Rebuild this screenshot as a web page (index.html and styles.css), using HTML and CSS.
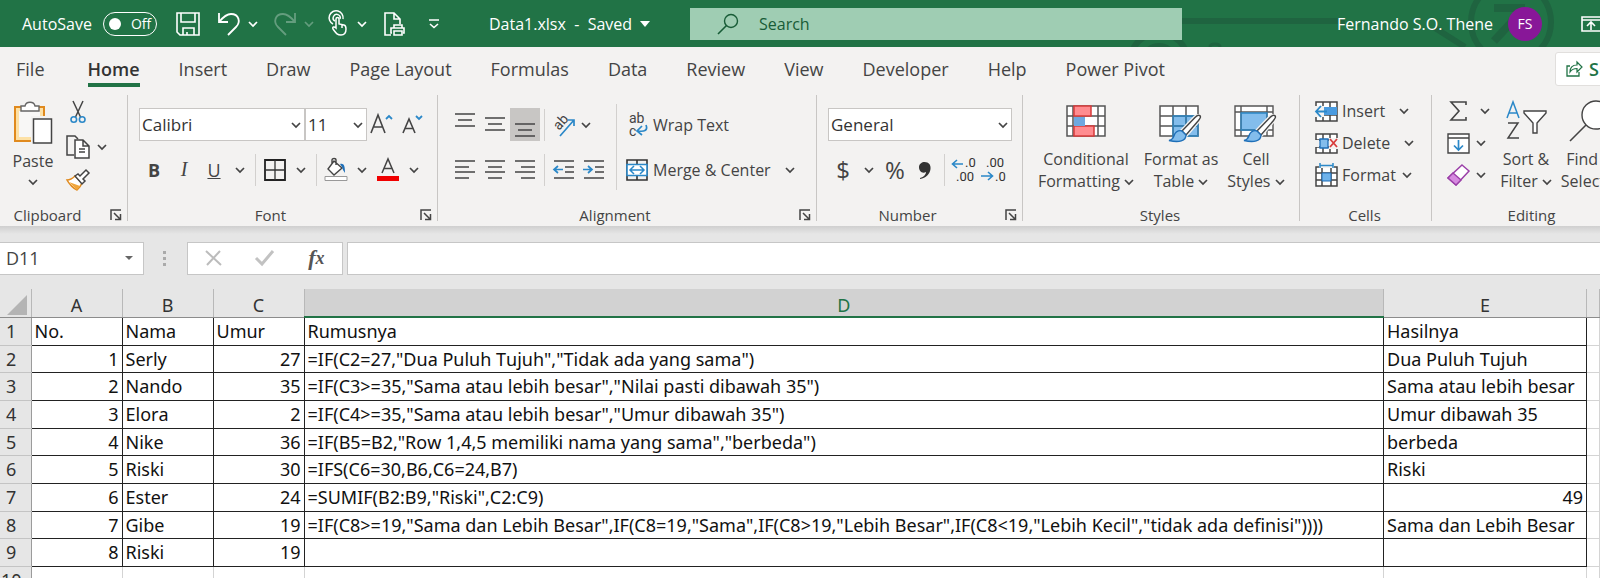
FILE: index.html
```
<!DOCTYPE html>
<html lang="id">
<head>
    <meta charset="UTF-8">
    <meta name="viewport" content="width=device-width, initial-scale=1.0">
    <title>Data1.xlsx - Saved</title>
    <link rel="stylesheet" href="styles.css">
</head>
<body>
    <!-- Shared icons -->
    <svg class="sprite" aria-hidden="true">
        <symbol id="chev" viewBox="0 0 10 10"><path d="M1 3l4 4 4-4" fill="none" stroke="currentColor" stroke-width="1.7"/></symbol>
        <symbol id="launch" viewBox="0 0 12 12"><path d="M1 11V1h10M4 4l6 6M10.500 5v5.500H5" fill="none" stroke="currentColor" stroke-width="1.5"/></symbol>
        <symbol id="brush" viewBox="0 0 34 30">
            <path d="M31.500 1.500c2 1 .5 3-1 5L18 21l-4-4L27 3.500c1.500-1.500 3-3 4.500-2z" fill="#fff" stroke="#f3f2f1" stroke-width="4"/>
            <path d="M31.500 1.500c2 1 .5 3-1 5L18 21l-4-4L27 3.500c1.500-1.500 3-3 4.500-2z" fill="#fff" stroke="#444" stroke-width="1.400"/>
            <path d="M14 17l4 4c0 6-7 8-17 5.500 5-1 4-3.500 6-7 1.500-2.500 5-3.500 7-2.500z" fill="#83bdec" stroke="#1e6fb8" stroke-width="1.400"/>
        </symbol>
    </svg>

    <header class="titlebar">
        <svg class="circuit" viewBox="0 0 480 47" aria-hidden="true">
            <g fill="none" stroke="#1f6440" stroke-width="6">
                <path d="M60 21h165M315 28l30 19"/>
                <circle cx="39" cy="62" r="29"/><circle cx="39" cy="62" r="17" stroke-width="4"/>
                <path d="M90 47c0-4 10-4 10 0M110 49h125" stroke-width="3"/>
                <circle cx="391" cy="22" r="40"/>
                <path d="M374 41l27-29M374 8h27v27" stroke-width="8"/>
            </g>
        </svg>
        <div class="quick">
            <label class="autosave">AutoSave
                <span class="toggle"><input type="checkbox"><span>Off</span></span>
            </label>
            <button class="q-save" aria-label="Save"><svg width="24" height="24" viewBox="0 0 24 24"><path d="M1 1h22v22H4l-3-3zM5 1v9h14V1M7 23v-7h11v7M11 23v-3" fill="none" stroke="currentColor" stroke-width="1.600"/></svg></button>
            <button class="q-undo" aria-label="Undo"><svg width="24" height="24" viewBox="0 0 24 24"><path d="M2 1v9h9M2 10C7 4 10 2 14 2c8 0 10 8 5 13l-8 8" fill="none" stroke="currentColor" stroke-width="1.800"/></svg></button>
            <button class="q-chev" aria-label="Undo list"><svg width="10" height="10"><use href="#chev"/></svg></button>
            <button class="q-undo faded" aria-label="Redo"><svg width="24" height="24" viewBox="0 0 24 24"><path d="M22 1v9h-9M22 10C17 4 14 2 10 2 2 2 0 10 5 15l8 8" fill="none" stroke="currentColor" stroke-width="1.800"/></svg></button>
            <button class="q-chev faded" aria-label="Redo list"><svg width="10" height="10"><use href="#chev"/></svg></button>
            <button class="q-touch" aria-label="Touch mode"><svg width="20" height="24" viewBox="0 0 20 24"><path d="M4 12A7 7 0 1 1 14 7M6 9a3.500 3.500 0 1 1 5-2" fill="none" stroke="currentColor" stroke-width="1.500"/><path d="M7 16V7c0-2 3-2 3 0v5l5 1c2 .5 2 2 2 4 0 4-2 6-5 6-4 0-5-2-8-6-1-2 1-3 3-1zM13 13v3" fill="none" stroke="currentColor" stroke-width="1.500"/></svg></button>
            <button class="q-chev" aria-label="Touch options"><svg width="10" height="10"><use href="#chev"/></svg></button>
            <button class="q-print" aria-label="Print preview"><svg width="22" height="24" viewBox="0 0 22 24"><path d="M7 23H1V1h9l6 6v5M10 1v6h6" fill="none" stroke="currentColor" stroke-width="1.600"/><path d="M10 16v-3h8v3M8 21h-1v-5h13v5h-1M10 19h8v4h-8z" fill="none" stroke="currentColor" stroke-width="1.600"/></svg></button>
            <button class="q-more" aria-label="Customize toolbar"><svg width="12" height="10" viewBox="0 0 12 10"><path d="M1 1h10M2 5l4 3.500L10 5" fill="none" stroke="currentColor" stroke-width="1.600"/></svg></button>
        </div>
        <button class="filename">Data1.xlsx&nbsp; -&nbsp; Saved <svg width="10" height="6" viewBox="0 0 10 6"><path d="M0 0h10L5 6z" fill="currentColor"/></svg></button>
        <label class="search">
            <svg width="22" height="22" viewBox="0 0 22 22"><circle cx="14" cy="8" r="6.500" fill="none" stroke="currentColor" stroke-width="1.400"/><path d="M9.500 12.500 1 21" stroke="currentColor" stroke-width="1.600"/></svg>
            <input type="search" placeholder="Search" aria-label="Search">
        </label>
        <div class="account">
            <span>Fernando S.O. Thene</span>
            <button class="avatar">FS</button>
            <button class="display" aria-label="Ribbon display options"><svg width="22" height="16" viewBox="0 0 22 16"><path d="M1 1h20v14H1zM1 4h20M10 14V6M6 10l4-4 4 4" fill="none" stroke="currentColor" stroke-width="1.600"/></svg></button>
        </div>
    </header>

    <nav class="tabs">
        <a href="#file" class="file">File</a>
        <a href="#home" class="active">Home</a>
        <a href="#insert">Insert</a>
        <a href="#draw">Draw</a>
        <a href="#layout">Page Layout</a>
        <a href="#formulas">Formulas</a>
        <a href="#data">Data</a>
        <a href="#review">Review</a>
        <a href="#view">View</a>
        <a href="#developer">Developer</a>
        <a href="#help">Help</a>
        <a href="#pivot">Power Pivot</a>
        <button class="share"><svg width="17" height="17" viewBox="0 0 17 17"><path d="M4 6H1v10h12v-4" fill="none" stroke="currentColor" stroke-width="1.300"/><path d="M4 12c0-5 3-7 7-7V2l5 5-5 5V8.500c-3 0-5 .5-7 3.500z" fill="none" stroke="currentColor" stroke-width="1.200"/></svg>Share</button>
    </nav>

    <section class="ribbon">
        <div class="group clipboard">
            <div class="body">
                <button class="paste">
                    <svg width="40" height="44" viewBox="0 0 40 44">
                        <path d="M2 6h29v34H2z" fill="#fde1a6" stroke="#e08a1e" stroke-width="2"/>
                        <path d="M6 10h21v26H6z" fill="#f8f7f6"/>
                        <path d="M8 10V5h4c1-5 9-5 10 0h4v5z" fill="#fff" stroke="#666" stroke-width="1.400"/>
                        <path d="M20 17h19v26H20z" fill="#fff" stroke="#f3f2f1" stroke-width="4"/>
                        <path d="M20.500 18h18v24h-18z" fill="#fff" stroke="#444" stroke-width="1.500"/>
                    </svg>
                    <span>Paste</span>
                    <svg width="10" height="10"><use href="#chev"/></svg>
                </button>
                <div class="clip-tools">
                    <button aria-label="Cut"><svg width="16" height="24" viewBox="0 0 16 24"><path d="M3 1l7.500 16M13 1 5.500 17" fill="none" stroke="#444" stroke-width="1.500"/><circle cx="3.800" cy="19.500" r="2.800" fill="none" stroke="#2b88c8" stroke-width="1.600"/><circle cx="12.200" cy="19.500" r="2.800" fill="none" stroke="#2b88c8" stroke-width="1.600"/></svg></button>
                    <div class="row">
                        <button aria-label="Copy"><svg width="24" height="24" viewBox="0 0 24 24"><path d="M8 20H1V1h8l3 3" fill="none" stroke="#444" stroke-width="1.500"/><path d="M9 5h8l6 6v12H9zM17 5v6h6M13 14h6M13 17h6" fill="#fff" stroke="#444" stroke-width="1.500"/></svg></button>
                        <button class="chev" aria-label="Copy options"><svg width="10" height="10"><use href="#chev"/></svg></button>
                    </div>
                    <button aria-label="Format Painter"><svg width="24" height="22" viewBox="0 0 24 22"><path d="M1 11c3 0 6-2 8-4l7 7c-1 3-3 5-5 7-3-1-8-6-10-10z" fill="#fff" stroke="#e08a1e" stroke-width="1.500"/><path d="M3 13l11 4-3 4z" fill="#f0a63c"/><path d="M9 7l3-2 2 2 6-6 3 3-6 6 2 2-3 3z" fill="#fff" stroke="#444" stroke-width="1.500"/></svg></button>
                </div>
            </div>
            <div class="caption">Clipboard<button class="launch" aria-label="Clipboard settings"><svg width="12" height="12"><use href="#launch"/></svg></button></div>
        </div>

        <div class="group font">
            <div class="body rows">
                <div class="row">
                    <span class="select font-name"><select aria-label="Font"><option>Calibri</option></select><svg width="10" height="10"><use href="#chev"/></svg></span>
                    <span class="select font-size"><select aria-label="Font size"><option>11</option></select><svg width="10" height="10"><use href="#chev"/></svg></span>
                    <button class="tool" aria-label="Increase font size"><svg width="24" height="26" viewBox="0 0 24 26"><path d="M1 21 8 3l7 18M3.500 15h9" fill="none" stroke="#444" stroke-width="1.600"/><path d="M16 7l3-3 3 3" fill="none" stroke="#2b88c8" stroke-width="1.800"/></svg></button>
                    <button class="tool" aria-label="Decrease font size"><svg width="24" height="26" viewBox="0 0 24 26"><path d="M3 21 9 7l6 14M5 16.500h8" fill="none" stroke="#444" stroke-width="1.600"/><path d="M16 4l3 3 3-3" fill="none" stroke="#2b88c8" stroke-width="1.800"/></svg></button>
                </div>
                <div class="row">
                    <button class="tool bold">B</button>
                    <button class="tool italic">I</button>
                    <button class="tool underline">U</button>
                    <button class="chev" aria-label="Underline styles"><svg width="10" height="10"><use href="#chev"/></svg></button>
                    <span class="sep"></span>
                    <button class="tool" aria-label="Borders"><svg width="22" height="22" viewBox="0 0 22 22"><path d="M1 1h20v20H1z" fill="none" stroke="#222" stroke-width="1.800"/><path d="M11 1v20M1 11h20" stroke="#333" stroke-width="1.300"/></svg></button>
                    <button class="chev" aria-label="Border styles"><svg width="10" height="10"><use href="#chev"/></svg></button>
                    <span class="sep"></span>
                    <button class="tool" aria-label="Fill color"><svg width="24" height="24" viewBox="0 0 24 24"><path d="M10 3l8 7-8 7-6-6zM8 6V2c0-2 4-2 4 0v5" fill="#fff" stroke="#444" stroke-width="1.400"/><path d="M16 6c4-1 5 2 5 9l-2-3-1-3z" fill="#1e6fb8"/><path d="M1 18.500h22v4H1z" fill="#fff" stroke="#999"/></svg></button>
                    <button class="chev" aria-label="Fill colors"><svg width="10" height="10"><use href="#chev"/></svg></button>
                    <button class="tool" aria-label="Font color"><svg width="24" height="24" viewBox="0 0 24 24"><path d="M6 15 12 1l6 14M8 10.500h8" fill="none" stroke="#444" stroke-width="1.500"/><path d="M1 18h22v5H1z" fill="#f00000"/></svg></button>
                    <button class="chev" aria-label="Font colors"><svg width="10" height="10"><use href="#chev"/></svg></button>
                </div>
            </div>
            <div class="caption">Font<button class="launch" aria-label="Font settings"><svg width="12" height="12"><use href="#launch"/></svg></button></div>
        </div>

        <div class="group alignment">
            <div class="body">
                <div class="rows">
                    <div class="row">
                        <button class="tool" aria-label="Top align"><svg width="22" height="32" viewBox="0 0 22 32"><path d="M1 5h20M4 11h14M1 17h20" stroke="#444" stroke-width="1.600"/></svg></button>
                        <button class="tool" aria-label="Middle align"><svg width="22" height="32" viewBox="0 0 22 32"><path d="M1 9h20M4 15h14M1 21h20" stroke="#444" stroke-width="1.600"/></svg></button>
                        <button class="tool pressed" aria-label="Bottom align"><svg width="22" height="32" viewBox="0 0 22 32"><path d="M1 15h20M4 21h14M1 27h20" stroke="#444" stroke-width="1.600"/></svg></button>
                        <span class="sep"></span>
                        <button class="tool" aria-label="Orientation"><svg width="26" height="26" viewBox="0 0 26 26"><text x="0" y="0" transform="translate(8 19) rotate(-48)" class="glyph">ab</text><path d="M9 24 23 8M17 8h6v6" fill="none" stroke="#2b88c8" stroke-width="1.700"/></svg></button>
                        <button class="chev narrow" aria-label="Orientation options"><svg width="10" height="10"><use href="#chev"/></svg></button>
                    </div>
                    <div class="row">
                        <button class="tool" aria-label="Align left"><svg width="22" height="22" viewBox="0 0 22 22"><path d="M1 2h20M1 8h14M1 13h20M1 19h14" stroke="#444" stroke-width="1.600"/></svg></button>
                        <button class="tool" aria-label="Center"><svg width="22" height="22" viewBox="0 0 22 22"><path d="M1 2h20M4 8h14M1 13h20M4 19h14" stroke="#444" stroke-width="1.600"/></svg></button>
                        <button class="tool" aria-label="Align right"><svg width="22" height="22" viewBox="0 0 22 22"><path d="M1 2h20M7 8h14M1 13h20M7 19h14" stroke="#444" stroke-width="1.600"/></svg></button>
                        <span class="sep"></span>
                        <button class="tool" aria-label="Decrease indent"><svg width="22" height="22" viewBox="0 0 22 22"><path d="M1 2h20M12 8h9M12 13h9M1 19h20" stroke="#444" stroke-width="1.600"/><path d="M10 10.500H1M5 7l-4 3.500L5 14" fill="none" stroke="#2b88c8" stroke-width="1.700"/></svg></button>
                        <button class="tool" aria-label="Increase indent"><svg width="22" height="22" viewBox="0 0 22 22"><path d="M1 2h20M12 8h9M12 13h9M1 19h20" stroke="#444" stroke-width="1.600"/><path d="M0 10.500h9M5 7l4 3.500L5 14" fill="none" stroke="#2b88c8" stroke-width="1.700"/></svg></button>
                    </div>
                </div>
                <span class="sep tall"></span>
                <div class="rows">
                    <button class="row text-tool"><svg width="22" height="24" viewBox="0 0 22 24"><text x="3" y="10" class="glyph">ab</text><text x="3" y="23" class="glyph">c</text><path d="M20 12c2 5-1 7-8 6M16 13l-5 5 5 4" fill="none" stroke="#2b88c8" stroke-width="1.700"/></svg>Wrap Text</button>
                    <div class="row">
                        <button class="row text-tool"><svg width="22" height="22" viewBox="0 0 22 22"><path d="M1 1h20v20H1zM11 1v20" fill="none" stroke="#333" stroke-width="1.600"/><path d="M1 5.500h20v11H1z" fill="#fff" stroke="#2b88c8" stroke-width="1.600"/><path d="M4 11h14M8 7l-4 4 4 4M14 7l4 4-4 4" fill="none" stroke="#2b88c8" stroke-width="1.500"/></svg>Merge &amp; Center</button>
                        <button class="chev merge" aria-label="Merge options"><svg width="10" height="10"><use href="#chev"/></svg></button>
                    </div>
                </div>
            </div>
            <div class="caption">Alignment<button class="launch" aria-label="Alignment settings"><svg width="12" height="12"><use href="#launch"/></svg></button></div>
        </div>

        <div class="group number">
            <div class="body rows">
                <div class="row">
                    <span class="select format"><select aria-label="Number format"><option>General</option></select><svg width="10" height="10"><use href="#chev"/></svg></span>
                </div>
                <div class="row">
                    <button class="tool sign">$</button>
                    <button class="chev" aria-label="Currencies"><svg width="10" height="10"><use href="#chev"/></svg></button>
                    <button class="tool sign">%</button>
                    <button class="tool" aria-label="Comma style"><svg width="12" height="20" viewBox="0 0 12 20"><path d="M1 18c4-1 6-4 6-6-4 2-7-1-7-5 0-3 3-5 5.500-5C10 2 12 5 11.500 9 11 14 7 18 1 19z" fill="#333"/></svg></button>
                    <span class="sep"></span>
                    <button class="tool" aria-label="Increase decimal"><svg width="26" height="24" viewBox="0 0 26 24"><text x="14" y="9" class="digits">.0</text><text x="5" y="23" class="digits">.00</text><path d="M12 6H1M6 2 1.500 6 6 10" fill="none" stroke="#2b88c8" stroke-width="1.600"/></svg></button>
                    <button class="tool" aria-label="Decrease decimal"><svg width="26" height="24" viewBox="0 0 26 24"><text x="5" y="9" class="digits">.00</text><text x="14" y="23" class="digits">.0</text><path d="M0 18h12M7 14l4.500 4L7 22" fill="none" stroke="#2b88c8" stroke-width="1.600"/></svg></button>
                </div>
            </div>
            <div class="caption">Number<button class="launch" aria-label="Number settings"><svg width="12" height="12"><use href="#launch"/></svg></button></div>
        </div>

        <div class="group styles">
            <div class="body">
                <button class="big wide">
                    <svg width="40" height="42" viewBox="0 0 40 42"><path d="M1 6h38v30H1zM7 6v30M32 6v30M1 16h38M1 26h38" fill="#fff" stroke="#555" stroke-width="1.500"/><path d="M8 6h17v10H8zM8 26h20v10H8z" fill="#ff8c90" stroke="#d83b3b" stroke-width="1.500"/><path d="M8 17h11v9H8z" fill="#6ea8e0"/><path d="M19.500 17h7v8h-7z" fill="#fff"/></svg>
                    <span>Conditional<br>Formatting <svg width="10" height="10"><use href="#chev"/></svg></span>
                </button>
                <button class="big">
                    <svg width="44" height="42" viewBox="0 0 44 42"><path d="M1 6h38v30H1z" fill="#fff"/><path d="M14 16h25v20H14z" fill="#83bdec"/><path d="M1 6h38v30H1zM14 6v30M27 6v30M1 16h38M1 26h38" fill="none" stroke="#555" stroke-width="1.500"/><path d="M14 16h25v20H14zM27 16v20M14 26h25" fill="none" stroke="#2b88c8" stroke-width="1.300"/><use href="#brush" x="9" y="14" width="34" height="30"/></svg>
                    <span>Format as<br>Table <svg width="10" height="10"><use href="#chev"/></svg></span>
                </button>
                <button class="big slim">
                    <svg width="44" height="42" viewBox="0 0 44 42"><path d="M1 6h38v30H1z" fill="#fff"/><path d="M7 13h26v17H7z" fill="#83bdec"/><path d="M1 6h38v30H1zM7 6v30M33 6v30M1 12h38M1 30h38" fill="none" stroke="#555" stroke-width="1.400"/><path d="M7 13h26v17H7z" fill="none" stroke="#2b88c8" stroke-width="1.300"/><use href="#brush" x="9" y="14" width="34" height="30"/></svg>
                    <span>Cell<br>Styles <svg width="10" height="10"><use href="#chev"/></svg></span>
                </button>
            </div>
            <div class="caption">Styles</div>
        </div>

        <div class="group cells">
            <div class="body list">
                <button><svg width="23" height="21" viewBox="0 0 23 21"><path d="M1 1h21v19H1zM1 7h21M1 14h21M8 1v19M15 1v19" fill="#fff" stroke="#444" stroke-width="1.500"/><path d="M9 6h13v8H9z" fill="#4a9be0"/><path d="M0 5h9v11H0z" fill="#f3f2f1"/><path d="M12 10.500H1M6 5l-5 5.500L6 16" fill="none" stroke="#2b88c8" stroke-width="1.800"/></svg>Insert<svg class="gap-16" width="10" height="10"><use href="#chev"/></svg></button>
                <button><svg width="23" height="21" viewBox="0 0 23 21"><path d="M1 1h21v19H1zM1 7h21M1 14h21M8 1v19M15 1v19" fill="#fff" stroke="#444" stroke-width="1.500"/><path d="M0 7h4v7H0z" fill="#f3f2f1"/><path d="M5 6h8v9H5z" fill="#83bdec" stroke="#1e6fb8" stroke-width="1.300"/><path d="M14 5h9v11h-9z" fill="#f3f2f1"/><path d="M15 6l7 8M22 6l-7 8" stroke="#d83b3b" stroke-width="1.800"/></svg>Delete<svg class="gap-16" width="10" height="10"><use href="#chev"/></svg></button>
                <button><svg width="23" height="24" viewBox="0 0 23 24"><path d="M1 4h21v19H1zM1 10h21M1 17h21M7 4v19M16 4v19" fill="#fff" stroke="#444" stroke-width="1.500"/><path d="M7 10h9v8H7z" fill="#6eb2ea" stroke="#1e6fb8"/><path d="M4 0h15v5H4z" fill="#f3f2f1"/><path d="M5 2.500h13M5 0v5M18 0v5" stroke="#2b88c8" stroke-width="1.500"/></svg>Format<svg class="gap-4" width="10" height="10"><use href="#chev"/></svg></button>
            </div>
            <div class="caption">Cells</div>
        </div>

        <div class="group editing">
            <div class="body">
                <div class="list">
                    <button aria-label="AutoSum"><svg width="23" height="22" viewBox="0 0 23 22"><path d="M19 5V2H4l8 9-8 9h15v-3" fill="none" stroke="#444" stroke-width="1.600"/></svg><svg class="gap-8" width="10" height="10"><use href="#chev"/></svg></button>
                    <button aria-label="Fill"><svg width="23" height="21" viewBox="0 0 23 21"><path d="M1 1h21v19H1zM1 5h21" fill="#fff" stroke="#444" stroke-width="1.400"/><path d="M11.500 7v10M7 12.500l4.500 4.500 4.500-4.500" fill="none" stroke="#2b88c8" stroke-width="1.700"/></svg><svg class="gap-4" width="10" height="10"><use href="#chev"/></svg></button>
                    <button aria-label="Clear"><svg width="23" height="22" viewBox="0 0 23 22"><path d="M15 1l7 6L9 21l-8-7z" fill="#fff" stroke="#9b3fa8" stroke-width="1.500"/><path d="M6 9l8 7-5 5-8-7z" fill="#d68ae0" stroke="#9b3fa8" stroke-width="1.400"/></svg><svg class="gap-4" width="10" height="10"><use href="#chev"/></svg></button>
                </div>
                <button class="big slim">
                    <svg width="42" height="42" viewBox="0 0 42 42"><path d="M2 18 8 2l6 16M4 13h8" fill="none" stroke="#2b88c8" stroke-width="1.500"/><path d="M3 23h10L3 38h11" fill="none" stroke="#444" stroke-width="1.500"/><path d="M19 11h22v2l-9 10v10h-4V23l-9-10z" fill="#fff" stroke="#444" stroke-width="1.400"/></svg>
                    <span>Sort &amp;<br>Filter <svg width="10" height="10"><use href="#chev"/></svg></span>
                </button>
                <button class="big slim">
                    <svg width="44" height="42" viewBox="0 0 44 42"><circle cx="28" cy="15" r="14" fill="#fff" stroke="#444" stroke-width="1.400"/><path d="M18 25 2 41" stroke="#444" stroke-width="1.600"/></svg>
                    <span>Find &amp;<br>Select <svg width="10" height="10"><use href="#chev"/></svg></span>
                </button>
            </div>
            <div class="caption">Editing</div>
        </div>
    </section>

    <section class="formula-bar">
        <label class="name-box"><input type="text" value="D11" aria-label="Name box"><svg width="8" height="4" viewBox="0 0 8 4"><path d="M0 0h8L4 4z" fill="#666"/></svg></label>
        <svg class="grip" width="4" height="16" viewBox="0 0 4 16"><path d="M0 1h3v3H0zM0 7h3v3H0zM0 13h3v3H0z" fill="#aaa"/></svg>
        <div class="entry">
            <button aria-label="Cancel"><svg width="17" height="16" viewBox="0 0 17 16"><path d="M1 1l15 14M15 1 2 15" stroke="#bcbcbc" stroke-width="2"/></svg></button>
            <button aria-label="Enter"><svg width="20" height="16" viewBox="0 0 20 16"><path d="M1 8l6 6L18 1" fill="none" stroke="#c2c2c2" stroke-width="3"/></svg></button>
            <button class="fx">f<small>x</small></button>
        </div>
        <input class="formula" type="text" aria-label="Formula">
    </section>

    <table class="sheet">
        <colgroup>
            <col class="c-head"><col class="c-small"><col class="c-small"><col class="c-small"><col><col class="c-result"><col class="c-rest">
        </colgroup>
        <thead>
            <tr><th class="corner"><svg width="20" height="20" viewBox="0 0 20 20"><path d="M20 0v20H0z" fill="#b4b4b4"/></svg></th><th>A</th><th>B</th><th>C</th><th class="selected">D</th><th>E</th><th></th></tr>
        </thead>
        <tbody>
            <tr><th>1</th><td>No.</td><td>Nama</td><td>Umur</td><td>Rumusnya</td><td>Hasilnya</td><td></td></tr>
            <tr><th>2</th><td class="num">1</td><td>Serly</td><td class="num">27</td><td>=IF(C2=27,"Dua Puluh Tujuh","Tidak ada yang sama")</td><td>Dua Puluh Tujuh</td><td></td></tr>
            <tr><th>3</th><td class="num">2</td><td>Nando</td><td class="num">35</td><td>=IF(C3&gt;=35,"Sama atau lebih besar","Nilai pasti dibawah 35")</td><td>Sama atau lebih besar</td><td></td></tr>
            <tr><th>4</th><td class="num">3</td><td>Elora</td><td class="num">2</td><td>=IF(C4&gt;=35,"Sama atau lebih besar","Umur dibawah 35")</td><td>Umur dibawah 35</td><td></td></tr>
            <tr><th>5</th><td class="num">4</td><td>Nike</td><td class="num">36</td><td>=IF(B5=B2,"Row 1,4,5 memiliki nama yang sama","berbeda")</td><td>berbeda</td><td></td></tr>
            <tr><th>6</th><td class="num">5</td><td>Riski</td><td class="num">30</td><td>=IFS(C6=30,B6,C6=24,B7)</td><td>Riski</td><td></td></tr>
            <tr><th>7</th><td class="num">6</td><td>Ester</td><td class="num">24</td><td>=SUMIF(B2:B9,"Riski",C2:C9)</td><td class="num">49</td><td></td></tr>
            <tr><th>8</th><td class="num">7</td><td>Gibe</td><td class="num">19</td><td>=IF(C8&gt;=19,"Sama dan Lebih Besar",IF(C8=19,"Sama",IF(C8&gt;19,"Lebih Besar",IF(C8&lt;19,"Lebih Kecil","tidak ada definisi"))))</td><td>Sama dan Lebih Besar</td><td></td></tr>
            <tr><th>9</th><td class="num">8</td><td>Riski</td><td class="num">19</td><td></td><td></td><td></td></tr>
            <tr class="empty"><th>10</th><td></td><td></td><td></td><td></td><td></td><td></td></tr>
        </tbody>
    </table>
</body>
</html>
```
FILE: styles.css
```
* {
    box-sizing: border-box;
}

body {
    margin: 0;
    height: 100vh;
    overflow: hidden;
    background: #e6e6e6;
    color: #444;
    font-family: "Open Sans", "Noto Sans", sans-serif;
    font-size: 16px;
}

button, input, select {
    font: inherit;
    color: inherit;
    border: none;
    background: none;
    padding: 0;
    margin: 0;
}

button {
    display: flex;
    align-items: center;
    justify-content: center;
    flex-shrink: 0;
    white-space: nowrap;
}

svg {
    flex-shrink: 0;
    overflow: visible;
}

.sprite {
    display: none;
}

/* Title bar */
.titlebar {
    position: relative;
    display: flex;
    align-items: center;
    height: 47px;
    background: #217346;
    color: #fff;
    overflow: hidden;
}

.circuit {
    position: absolute;
    right: 0;
    top: 0;
    width: 480px;
    height: 47px;
}

.quick {
    display: flex;
    align-items: center;
    width: 489px;
    padding-left: 22px;
}

.autosave {
    display: flex;
    align-items: center;
    gap: 11px;
    margin-right: 19px;
}

.toggle {
    display: flex;
    align-items: center;
    gap: 10px;
    width: 54px;
    height: 24px;
    padding-left: 5px;
    border: 1px solid #fff;
    border-radius: 12px;
    font-size: 14px;
}

.toggle input {
    appearance: none;
    width: 12px;
    height: 12px;
    border-radius: 50%;
    background: #fff;
}

.q-save { margin-right: 17px; }
.q-undo { margin-right: 5px; }
.q-chev { width: 14px; margin-right: 13px; }
.q-touch { margin-right: 6px; }
.q-print { margin: 0 22px 0 2px; }
.faded { opacity: 0.3; }

.filename {
    width: 201px;
    gap: 8px;
    justify-content: flex-start;
}

.search {
    position: relative;
    display: flex;
    align-items: center;
    gap: 20px;
    flex: 1;
    height: 32px;
    padding-left: 27px;
    background: #9fcdb3;
    color: #185c37;
}

.search input {
    flex: 1;
    outline: none;
}

.search input::placeholder {
    color: #185c37;
}

.account {
    position: relative;
    display: flex;
    align-items: center;
    justify-content: flex-end;
    width: 418px;
}

.avatar {
    width: 34px;
    height: 34px;
    margin: 0 39px 0 15px;
    border-radius: 50%;
    background: #881798;
    font-size: 14px;
}

.display {
    width: 19px;
    justify-content: flex-start;
}

/* Tabs */
.tabs {
    display: flex;
    align-items: center;
    gap: 39px;
    height: 48px;
    padding-left: 16px;
    background: #f3f2f1;
    font-size: 18px;
    overflow: hidden;
}

.tabs a {
    flex-shrink: 0;
    color: #444;
    line-height: 28px;
    border-bottom: 4px solid transparent;
    text-decoration: none;
}

.tabs .file {
    margin-right: 4px;
}

.tabs .active {
    font-weight: 600;
    color: #333;
    border-bottom-color: #217346;
}

.share {
    height: 34px;
    margin: 0 -52px 5px auto;
    padding: 0 12px 0 10px;
    gap: 6px;
    background: #fff;
    border: 1px solid #e1dfdd;
    border-radius: 3px;
    color: #217346;
    font-weight: 600;
}

/* Ribbon */
.ribbon {
    display: flex;
    height: 131px;
    background: #f3f2f1;
    overflow: hidden;
}

.group {
    display: flex;
    flex-direction: column;
    flex-shrink: 0;
    height: 126px;
    border-right: 1px solid #c8c6c4;
}

.clipboard { width: 128px; }
.font { width: 310px; }
.alignment { width: 379px; }
.number { width: 206px; }
.styles { width: 277px; }
.cells { width: 132px; }
.editing { width: 202px; }

.body {
    display: flex;
    height: 110px;
}

.caption {
    position: relative;
    margin-top: auto;
    padding-right: 24px;
    text-align: center;
    font-size: 15px;
    line-height: 12px;
}

.clipboard .caption {
    padding-right: 32px;
}

.styles .caption,
.cells .caption,
.editing .caption {
    padding-right: 2px;
}

.launch {
    position: absolute;
    right: 5px;
    top: 0;
}

.row {
    display: flex;
    align-items: center;
    height: 33px;
}

.rows {
    display: flex;
    flex-direction: column;
    gap: 12px;
    padding-top: 13px;
}

.tool {
    width: 30px;
    height: 33px;
}

.pressed {
    background: #c8c6c4;
}

.chev {
    width: 22px;
    height: 33px;
}

.sep {
    width: 1px;
    height: 32px;
    margin: 0 4px;
    background: #d2d0ce;
}

.sep.tall {
    height: 86px;
    margin: 9px 9px 0 7px;
}

.paste {
    flex-direction: column;
    justify-content: flex-start;
    width: 66px;
    padding-top: 6px;
}

.paste span {
    line-height: 32px;
}

.clip-tools {
    display: flex;
    flex-direction: column;
    align-items: flex-start;
    gap: 6px;
    padding-top: 5px;
}

.clip-tools button {
    min-width: 24px;
}

.font .body,
.number .body {
    padding-left: 11px;
}

.alignment .body {
    padding-left: 12px;
}

.select {
    position: relative;
    height: 33px;
}

.select select {
    appearance: none;
    width: 100%;
    height: 100%;
    padding-left: 2px;
    border: 1px solid #c8c6c4;
    background: #fff;
    color: #333;
    font-size: 17px;
}

.select svg {
    position: absolute;
    right: 4px;
    top: 12px;
    pointer-events: none;
}

.font-name { width: 166px; }
.font-size { width: 62px; }
.format { width: 184px; }

.bold { font-weight: 700; font-size: 18px; }
.italic { font-family: "Liberation Serif", serif; font-style: italic; font-size: 20px; }
.underline { text-decoration: underline; font-size: 18px; }
.sign { font-size: 24px; }

.glyph {
    font-family: Roboto, sans-serif;
    font-size: 14px;
    fill: #444;
}

.digits {
    font-family: Roboto, sans-serif;
    font-size: 13px;
    fill: #333;
}

.narrow {
    width: 14px;
}

.text-tool {
    justify-content: flex-start;
    gap: 5px;
}

.merge {
    margin-left: 8px;
}

.big {
    flex-direction: column;
    justify-content: flex-start;
    gap: 6px;
    width: 80px;
    padding-top: 5px;
    line-height: 22px;
}

.big.wide { width: 110px; }
.big.slim { width: 70px; }

.styles .body {
    padding-left: 8px;
}

.list {
    display: flex;
    flex-direction: column;
    align-items: flex-start;
}

.list button {
    height: 32px;
    gap: 4px;
}

.cells .body,
.editing .body {
    padding-left: 15px;
}

.editing .list {
    margin-right: 4px;
}

.editing .big {
    width: 64px;
}

.list .gap-4 { margin-left: 2px; }
.list .gap-8 { margin-left: 6px; }
.list .gap-16 { margin-left: 10px; }

/* Formula bar */
.formula-bar {
    display: flex;
    align-items: center;
    height: 63px;
    padding-top: 1px;
    background: linear-gradient(#cfcfcf, #e6e6e6 8px);
}

.name-box {
    display: flex;
    align-items: center;
    width: 144px;
    height: 33px;
    padding: 0 10px 0 6px;
    border: 1px solid #c6c6c6;
    border-left: none;
    background: #fff;
}

.name-box input {
    flex: 1;
    min-width: 0;
    font-size: 18px;
}

.grip {
    margin: 0 20px 0 19px;
}

.entry {
    display: flex;
    align-items: center;
    width: 156px;
    height: 33px;
    border: 1px solid #c6c6c6;
    background: #fff;
    margin-right: 4px;
}

.entry button {
    flex: 1;
    height: 31px;
}

.entry .fx {
    font-family: "Liberation Serif", serif;
    font-style: italic;
    font-weight: 700;
    font-size: 22px;
    color: #555;
}

.fx small {
    font-size: 18px;
}

.formula {
    flex: 1;
    height: 33px;
    border: 1px solid #c6c6c6;
    border-right: none;
    background: #fff;
}

/* Worksheet */
.sheet {
    width: 100%;
    table-layout: fixed;
    border-collapse: collapse;
    background: #fff;
    color: #111;
    font-family: "Noto Sans", "Open Sans", sans-serif;
    font-size: 18px;
    font-kerning: none;
}

.c-head { width: 31px; }
.c-small { width: 91px; }
.c-result { width: 203px; }
.c-rest { width: 13px; }

.sheet th {
    padding: 0;
    background: #e6e6e6;
    color: #333;
    font-weight: 400;
}

.sheet thead th {
    height: 28px;
    padding-top: 4px;
    line-height: 22px;
    border-right: 1px solid #b8b8b8;
    border-bottom: 1px solid #8c8c8c;
}

.sheet .corner svg {
    display: block;
    margin-left: 7px;
}

.sheet thead .selected {
    background: #d2d2d2;
    color: #217346;
    border-bottom: 2px solid #217346;
}

.sheet tbody tr {
    height: 28px;
}

.sheet tbody tr:nth-child(3n+2) {
    height: 27px;
}

.sheet tbody th {
    padding-right: 8px;
    border-right: 1px solid #9b9b9b;
    border-bottom: 1px solid #c4c4c4;
}

.sheet td {
    padding: 0 3px;
    border: 1px solid #222;
    line-height: 22px;
    white-space: nowrap;
}

.sheet td:last-child,
.sheet .empty td {
    border-color: #d4d4d4;
}

.sheet td:last-child {
    border-left-color: #222;
}

.sheet .empty td {
    border-top-color: #222;
}

.sheet .num {
    text-align: right;
}
```
